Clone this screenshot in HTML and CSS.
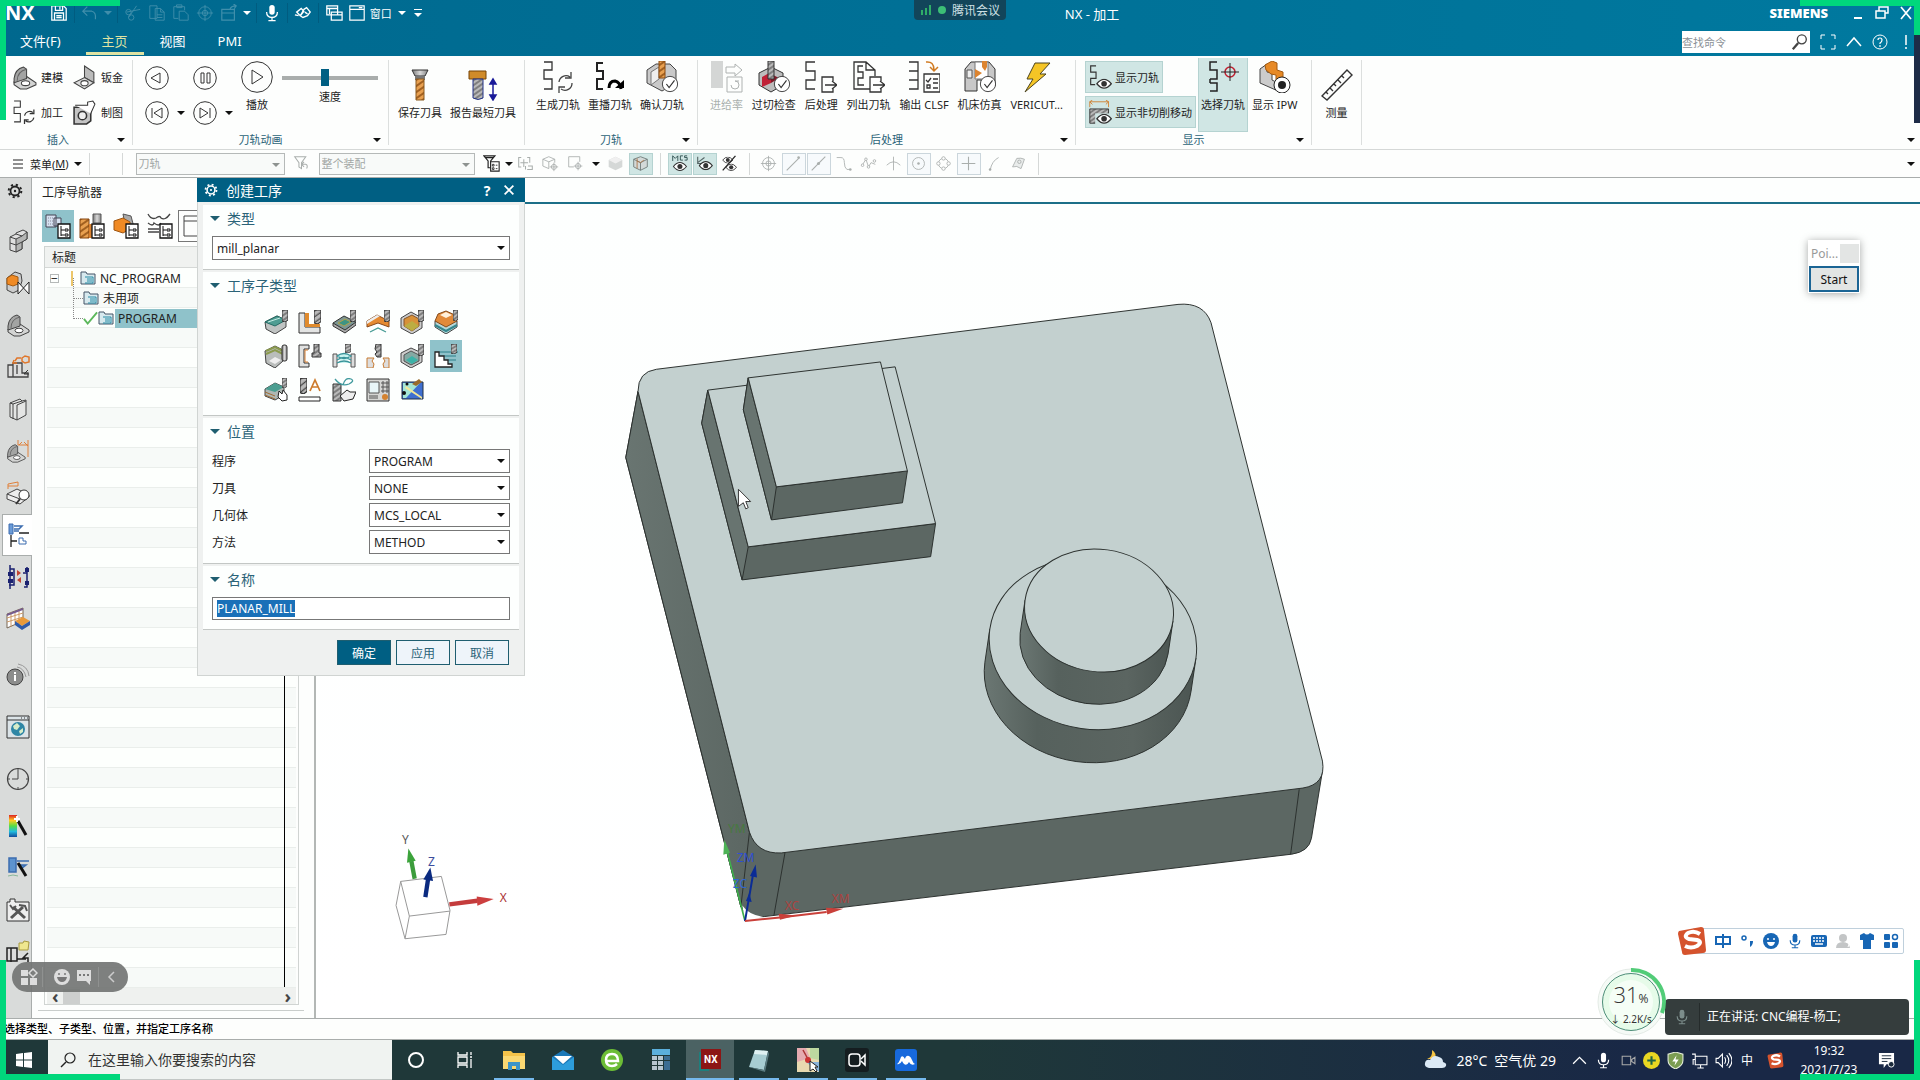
FILE: index.html
```html
<!DOCTYPE html>
<html lang="zh-CN">
<head>
    <meta charset="UTF-8">
    <meta name="viewport" content="width=device-width, initial-scale=1.0">
    <title>NX - 加工</title>
    <link rel="stylesheet" href="styles.css">
</head>
<body>
    <!-- shared icons -->
    <svg class="sprite" aria-hidden="true">
        <defs>
            <linearGradient id="metal" x1="0" x2="1"><stop offset="0" stop-color="#777"/><stop offset=".5" stop-color="#d8d8d8"/><stop offset="1" stop-color="#858585"/></linearGradient>
            <linearGradient id="rainbow" x1="0" y1="0" x2="0" y2="1"><stop offset="0" stop-color="#d22"/><stop offset=".25" stop-color="#fc2"/><stop offset=".5" stop-color="#5d4"/><stop offset=".75" stop-color="#2bd"/><stop offset="1" stop-color="#124a9c"/></linearGradient>
            <pattern id="hatch" width="4" height="4" patternUnits="userSpaceOnUse" patternTransform="rotate(-35)"><rect width="4" height="4" fill="#b9b9b9"/><path d="M0 1H4" stroke="#444"/></pattern>
            <pattern id="drill" width="5" height="5" patternUnits="userSpaceOnUse" patternTransform="rotate(-35)"><rect width="5" height="5" fill="#e8a050"/><path d="M0 1H5" stroke="#8a4a10" stroke-width="1.5"/></pattern>
        </defs>
        <symbol id="save" viewBox="0 0 20 20"><path d="M2 2h13l3 3v13H2zM6 2v5h8V2M11 3v3M5 18v-8h10v8M7 13h6M7 15h6" fill="none" stroke="currentColor" stroke-width="1.4"/></symbol>
        <symbol id="undo" viewBox="0 0 20 20"><path d="M7 3L2 8l5 5M2 8h10q5 1 4 9" fill="none" stroke="currentColor" stroke-width="1.3"/></symbol>
        <symbol id="cut" viewBox="0 0 20 20"><path d="M3 9l15-3M5 15L14 2" stroke="currentColor"/><g fill="none" stroke="currentColor"><circle cx="5" cy="9" r="3"/><circle cx="8" cy="15" r="3"/></g></symbol>
        <symbol id="copy" viewBox="0 0 20 20"><path d="M2 2h8v14H2zM8 5h6l4 4v9H8zM14 5v4h4M10 12h6M10 15h6" fill="none" stroke="currentColor"/></symbol>
        <symbol id="paste" viewBox="0 0 20 20"><path d="M7 16H2V3h12v4M5 3V1h6v3H5M8 8h6l4 4v6H8z" fill="none" stroke="currentColor"/></symbol>
        <symbol id="target" viewBox="0 0 20 20"><g fill="none" stroke="currentColor"><circle cx="10" cy="10" r="7"/><circle cx="10" cy="10" r="3"/><path d="M10 1v18M1 10h18"/></g></symbol>
        <symbol id="boxout" viewBox="0 0 20 20"><path d="M2 6h14v12H2zM2 10h14M11 6q1-4 7-4M15 0l3 2-2 3" fill="none" stroke="currentColor" stroke-width="1.3"/></symbol>
        <symbol id="mic" viewBox="0 0 20 20"><rect x="7" y="1" width="6" height="11" rx="3" fill="currentColor"/><path d="M4 9q0 6 6 6t6-6M10 15v3M6 18.500h8" fill="none" stroke="currentColor" stroke-width="1.4"/></symbol>
        <symbol id="sat" viewBox="0 0 20 20"><path d="M3 9l5-4 3 3-4 5zM11 6l3-2 4 5-3 4-5 2-3-2zM1 12l4 1M12 9l3 2" fill="none" stroke="currentColor" stroke-width="1.500"/></symbol>
        <symbol id="wins" viewBox="0 0 20 20"><path d="M2 2h12v10H2zM2 5h12M7 9h12v9H7zM7 12h12M5 5v6" fill="none" stroke="currentColor" stroke-width="1.4"/></symbol>
        <symbol id="win" viewBox="0 0 20 20"><path d="M2 2h16v16H2zM2 6h16M12 4h4" fill="none" stroke="currentColor" stroke-width="1.3"/></symbol>
        <symbol id="gear" viewBox="0 0 16 16"><circle cx="8" cy="8" r="4.500" fill="none" stroke="currentColor" stroke-width="1.800"/><circle cx="8" cy="8" r="6.300" fill="none" stroke="currentColor" stroke-width="2" stroke-dasharray="2.200 2.750"/><circle cx="8" cy="8" r="1.200" fill="currentColor"/></symbol>
        <symbol id="eye" viewBox="0 0 20 12"><path d="M1 6q9-11 18 0-9 11-18 0z" fill="#fff" stroke="#333" stroke-width="1.500"/><circle cx="10" cy="6" r="3.500" fill="#333"/></symbol>
        <symbol id="bracket" viewBox="0 0 24 24"><path d="M2 16l12-5 9 6v2l-9 4-6 0-6-4z" fill="#d3d4d3" stroke="#444"/><path d="M2 17v-4Q3 4 11 2l3 2v9l-6 2z" fill="#a3a4a3" stroke="#444"/><path d="M5 15Q5 6 14 4" fill="none" stroke="#666"/><ellipse cx="13" cy="17.500" rx="4" ry="2.300" fill="#fff" stroke="#444"/></symbol>
        <symbol id="sheet" viewBox="0 0 24 24"><path d="M12 1l9 6v10l-9-5z" fill="#bbb" stroke="#444"/><path d="M12 12l9 5-9 6-10-6z" fill="#ddd" stroke="#444"/><ellipse cx="12" cy="17.500" rx="3.500" ry="2.500" fill="#fff" stroke="#444"/></symbol>
        <symbol id="mach" viewBox="0 0 24 24"><path d="M2 1h6v6H2v6h6v8H2" fill="none" stroke="#333"/><path d="M12 15a5 5 0 0 1 8-3M21 9v4h-4M21 17a5 5 0 0 1-8 3M12 23v-4h4" fill="none" stroke="#333" stroke-width="1.200"/></symbol>
        <symbol id="draft" viewBox="0 0 24 24"><path d="M2 7h16v13l-4 3H2z" fill="#c4c4c4" stroke="#333" stroke-width="1.500"/><circle cx="10" cy="15" r="4" fill="#eee" stroke="#333" stroke-width="1.500"/><path d="M3 5h12V2l5-1 2 3-4 9" fill="#fff" stroke="#333"/></symbol>
        <symbol id="toolsave" viewBox="0 0 32 32"><path d="M8 1h16l-3 6H11z" fill="url(#metal)" stroke="#333"/><path d="M11 7h10v4H11z" fill="#777"/><path d="M12 10h8v21h-8z" fill="url(#drill)" stroke="#8a5a20"/></symbol>
        <symbol id="toolrep" viewBox="0 0 32 32"><path d="M2 2h17v8H2z" fill="#d08b2a" stroke="#774407"/><path d="M6 10h10v19q-5 3-10 0z" fill="url(#hatch)" stroke="#223388"/><path d="M26 11v18M23 15l3-5 3 5zM23 26l3 5 3-5z" fill="#1a1a99" stroke="#1a1a99" stroke-width="1.500"/></symbol>
        <symbol id="gen" viewBox="0 0 32 32"><path d="M2 1h8v8H2v9h8v10H2" fill="none" stroke="#333" stroke-width="1.300"/><path d="M17 21a7 7 0 0 1 11-5M29 11v6h-6M30 22a7 7 0 0 1-11 6M17 32v-6h6" fill="none" stroke="#444" stroke-width="1.300"/></symbol>
        <symbol id="replay" viewBox="0 0 32 32"><path d="M9 2H3v8h6v8H3v10h6" fill="none" stroke="#222" stroke-width="2"/><path d="M15 27q0-7 6-7 5 1 6 8" fill="none" stroke="#000" stroke-width="3"/><path d="M21 27h9v-8z" fill="#000"/></symbol>
        <symbol id="check" viewBox="0 0 20 20"><circle cx="10" cy="10" r="8.500" fill="#fff" stroke="#333"/><path d="M6 10l3 4 6-8" fill="none" stroke="#333" stroke-width="1.300"/></symbol>
        <symbol id="verify" viewBox="0 0 32 32"><path d="M1 9l9-6 14 0 6 6v13l-14 8-15-8z" fill="#c9c9c9" stroke="#444"/><path d="M5 11l8-5v12l-8 6z" fill="#eee" stroke="#777"/><path d="M13 0h6v17h-6z" fill="url(#drill)" stroke="#8a4a10"/><use href="#check" x="15" y="14" width="18" height="18"/></symbol>
        <symbol id="feed" viewBox="0 0 32 32"><path d="M0 0h12v27H0z" fill="#d4d6d5"/><path d="M15 6h9V3l7 6-7 6v-3h-9zM16 16h15v15H16zM20 24a4 4 0 1 0 4-4h4" fill="none" stroke="#aeb2b1"/></symbol>
        <symbol id="gouge" viewBox="0 0 32 32"><path d="M1 12l12-6 12 6v12l-12 7-12-7z" fill="#bdbdbd" stroke="#333"/><path d="M4 16l9-5v11l-9 4z" fill="#c02036"/><path d="M13 13l8 4-8 5z" fill="#821827"/><path d="M10 0h6v18h-6z" fill="url(#hatch)" stroke="#333"/><use href="#check" x="15" y="14" width="18" height="18"/></symbol>
        <symbol id="post" viewBox="0 0 32 32"><path d="M10 1H1v9h9v9H1v9h9" fill="none" stroke="#333" stroke-width="1.300"/><path d="M28 20v-4H17v15h11v-4M20 24h11M27 20l5 4-5 4" fill="none" stroke="#333" stroke-width="1.300"/></symbol>
        <symbol id="list" viewBox="0 0 32 32"><path d="M17 28H1V1h12l9 8v6M13 1v8h9M10 5H5v6h5v6H5v7h6" fill="none" stroke="#333" stroke-width="1.300"/><path d="M28 20v-4H17v15h11v-4M20 24h11M27 20l5 4-5 4" fill="#fff" stroke="#333" stroke-width="1.300"/></symbol>
        <symbol id="clsf" viewBox="0 0 32 32"><path d="M1 1h9v9H1M10 10v9H1M10 19v9H1M16 13h16v18H16zM18 19l2 2 3-4M19 24h3v3h-3zM25 18h5M25 22h5M25 27h5" fill="none" stroke="#333" stroke-width="1.300"/><path d="M18 1q8-1 8 8M22 6l4 4 4-4" fill="none" stroke="#d07a20" stroke-width="1.500"/></symbol>
        <symbol id="machsim" viewBox="0 0 32 32"><path d="M1 8l6-7h18l6 7v17H20l-3-6h-4v11H1z" fill="#c8c8c8" stroke="#333"/><path d="M11 1h13v17H11z" fill="#fff" stroke="#777"/><path d="M18 0h5v6l-2 4-3-4zM11 8l7 4-7 5z" fill="#dc8430"/><path d="M3 9h5v8H3z" fill="#eee" stroke="#555"/><use href="#check" x="15" y="14" width="18" height="18"/></symbol>
        <symbol id="bolt" viewBox="0 0 32 32"><path d="M14 2h15L19 13h6L4 31l8-13H6z" fill="#f5c526" stroke="#4b4420"/></symbol>
        <symbol id="showpath" viewBox="0 0 28 28"><path d="M9 1H3v7h6v7H3v7h5" fill="none" stroke="#333" stroke-width="1.300"/><use href="#eye" x="9" y="15" width="18" height="12"/></symbol>
        <symbol id="showcut" viewBox="0 0 28 28"><path d="M2 10h21v16H2z" fill="url(#hatch)" stroke="#333"/><path d="M2 8V2h21v6M5 0L2 2l3 3M20 0l3 2-3 3" fill="none" stroke="#d08030"/><path d="M8 15h20v13H8z" fill="#d0e6e4"/><use href="#eye" x="9" y="15" width="18" height="12"/></symbol>
        <symbol id="pick" viewBox="0 0 32 32"><path d="M10 1H3v8h7v9H3M10 18v0M3 9M3 22h7v8H3" fill="none" stroke="#222" stroke-width="1.500"/><path d="M3 18v4" stroke="#222" stroke-width="1.500"/><circle cx="23" cy="11" r="5" fill="none" stroke="#c02030" stroke-width="1.500"/><path d="M23 2v18M14 11h18" stroke="#222"/></symbol>
        <symbol id="ipw" viewBox="0 0 32 32"><path d="M1 8l7-5v8l5 1v7l6 3v8L1 22z" fill="#ccc" stroke="#444"/><path d="M6 4l7-4 5 2v7l6 2v7l6 3-6 5-7-5v-7l-5-1-5-4z" fill="#e78a26" stroke="#a35a10"/><circle cx="23" cy="24" r="8" fill="#fff" stroke="#222"/><circle cx="23" cy="24" r="4" fill="#222"/></symbol>
        <symbol id="ruler" viewBox="0 0 32 32"><path d="M1 27L26 1l5 5L6 31zM5 23l2 2M9 19l3 3M13 15l2 2M17 11l3 3M21 7l2 2" fill="none" stroke="#333" stroke-width="1.400"/></symbol>
        <symbol id="funnel" viewBox="0 0 20 20"><path d="M2 2h13l-5 7v7l-3-2V9zM11 11h4q3 1 1 5M13 8l-3 3 3 3" fill="none" stroke="currentColor" stroke-width="1.200"/></symbol>
        <symbol id="funnel2" viewBox="0 0 20 20"><path d="M1 1h13l-5 6v8H6V7zM3 3h9" fill="none" stroke="currentColor" stroke-width="1.400"/><path d="M9 8h10v11H9z" fill="#fff" stroke="currentColor" stroke-width="1.300"/><path d="M11 11h2v2h-2zM11 15h2v2h-2zM15 12h2M15 16h2" fill="none" stroke="currentColor"/></symbol>
        <symbol id="move" viewBox="0 0 20 20"><path d="M5 3H2v11h3M12 3h3v6M8 5v9M4 9h9M13 13h5v4h-6M10 13v4" fill="none" stroke="currentColor" stroke-width="1.200"/></symbol>
        <symbol id="cube" viewBox="0 0 20 20"><path d="M1 5l7-3 7 3v4M1 5v8l7 3M1 5l7 3 7-3M8 8v8" fill="none" stroke="currentColor"/><circle cx="14" cy="14" r="3" fill="none" stroke="currentColor"/><path d="M14 9v10M9 14h10" stroke="currentColor"/></symbol>
        <symbol id="cubef" viewBox="0 0 20 20"><path d="M2 6l8-4 8 4v8l-8 4-8-4z" fill="#d5d8d7"/><path d="M2 6l8-4 8 4-8 4z" fill="#f0f0f0"/></symbol>
        <symbol id="cubec" viewBox="0 0 20 20"><path d="M2 5l8-3 8 3v9l-8 4-8-4z" fill="#d3d9d8" stroke="#6c7775"/><path d="M2 5l8 4 8-4M10 9v9" fill="none" stroke="#6c7775"/><path d="M6 4v12M6 7l4 2 4-3" fill="none" stroke="#ae7245"/></symbol>
        <symbol id="sel" viewBox="0 0 20 20"><path d="M8 14H2V2h13v6" fill="none" stroke="currentColor"/><circle cx="13" cy="13" r="3" fill="none" stroke="currentColor"/><path d="M13 8v10M8 13h10" stroke="currentColor"/></symbol>
        <symbol id="veye" viewBox="0 0 20 20"><path d="M2 2v8h5M2 9l8-6" fill="none" stroke="#566" stroke-width="1.300"/><use href="#eye" x="3" y="7" width="17" height="11"/></symbol>
        <symbol id="mcs" viewBox="0 0 20 20"><path d="M2 7V1l3 3 3-3v6M14 1h-3v5h3M19 1h-3v2h3v3h-3" fill="none" stroke="#244"/><use href="#eye" x="2" y="8" width="17" height="11"/></symbol>
        <symbol id="noeye" viewBox="0 0 20 20"><use href="#eye" x="1" y="2" width="14" height="8"/><use href="#eye" x="5" y="10" width="14" height="9"/><path d="M2 18L17 1" stroke="#222" stroke-width="1.500"/></symbol>
        <symbol id="l1" viewBox="0 0 20 20"><path d="M2 18L17 3" stroke="currentColor" stroke-width="1.300"/><circle cx="16" cy="3" r="1.500" fill="currentColor"/></symbol>
        <symbol id="l2" viewBox="0 0 20 20"><path d="M2 18L18 2" stroke="currentColor" stroke-width="1.300"/><circle cx="10" cy="10" r="1.800" fill="currentColor"/></symbol>
        <symbol id="l3" viewBox="0 0 20 20"><path d="M2 3h5q4 0 4 6t3 8h4" fill="none" stroke="currentColor"/><circle cx="18" cy="17" r="1.500" fill="currentColor"/></symbol>
        <symbol id="l4" viewBox="0 0 20 20"><path d="M2 13l5-8 3 9 3-5 5 2" fill="none" stroke="currentColor"/><g fill="#fff" stroke="currentColor"><circle cx="3" cy="12" r="1.500"/><circle cx="7" cy="5" r="1.500"/><circle cx="10" cy="14" r="1.500"/><circle cx="17" cy="7" r="1.500"/></g></symbol>
        <symbol id="l5" viewBox="0 0 20 20"><path d="M10 2v16M2 12q8-8 16 0" fill="none" stroke="currentColor"/></symbol>
        <symbol id="l6" viewBox="0 0 20 20"><circle cx="10" cy="10" r="7" fill="none" stroke="currentColor"/><circle cx="10" cy="10" r="1.500" fill="currentColor"/></symbol>
        <symbol id="l7" viewBox="0 0 20 20"><circle cx="10" cy="10" r="6" fill="none" stroke="currentColor"/><g fill="#fff" stroke="currentColor"><circle cx="10" cy="4" r="2"/><circle cx="10" cy="16" r="2"/><circle cx="4" cy="10" r="2"/><circle cx="16" cy="10" r="2"/></g></symbol>
        <symbol id="l8" viewBox="0 0 20 20"><path d="M10 2v16M2 10h16" stroke="currentColor" stroke-width="1.300"/></symbol>
        <symbol id="l9" viewBox="0 0 20 20"><path d="M6 18Q8 7 16 3" fill="none" stroke="currentColor"/><circle cx="6" cy="17" r="1.500" fill="currentColor"/></symbol>
        <symbol id="l10" viewBox="0 0 20 20"><path d="M3 14l5-10q5-1 9 1l-4 11q-5-4-10-2z" fill="#e9eceb" stroke="currentColor"/><circle cx="11" cy="8" r="2" fill="none" stroke="currentColor"/></symbol>
        <!-- resource bar -->
        <symbol id="r1" viewBox="0 0 24 24"><path d="M4 8l6-3 0-1 7-3 4 2v7l-5 3v7l-6 3-6-2z" fill="#dfdfdf" stroke="#444"/><path d="M10 10l6-3 5-4v7l-5 3v7l-6 3z" fill="#b4b5b4" stroke="#444"/><path d="M4 8l6 2M4 14l6 2 6-3M10 5l6 2" fill="none" stroke="#444"/></symbol>
        <symbol id="r2" viewBox="0 0 24 24"><path d="M1 7l8-6 6 2 1 7-3 9-6 3-6-3z" fill="#ccc" stroke="#444"/><path d="M1 7l5-3 6 2v7l-5 2-6-2z" fill="#f08a24" stroke="#a45a10"/><path d="M12 11v12l11-12v12z" fill="#fff" stroke="#222"/></symbol>
        <symbol id="r4" viewBox="0 0 24 24"><path d="M2 10h5V8h9v10h6v4H2zM7 9v13M11 10v9M2 22h20" fill="#ddd" stroke="#444" stroke-width="1.300"/><path d="M22 15l-4 4h5" fill="none" stroke="#333"/><path d="M9 6l2-3h4M16 3l3-2 4 1v5l-4 1-3-2zM8 5l-1 3h4" fill="none" stroke="#e0762a" stroke-width="1.500"/></symbol>
        <symbol id="r5" viewBox="0 0 24 24"><path d="M4 6l10-4 2 2 4-1v15l-9 5-7-3zM4 6l3 1v15M7 7l9-3M11 8v15M11 8l9-4" fill="#e4e5e4" stroke="#444"/></symbol>
        <symbol id="r6" viewBox="0 0 24 24"><use href="#bracket" y="4" width="20" height="20"/><path d="M12 1v5h10V1M13 6l3-3M18 3l4 4M22 6v12" fill="none" stroke="#e0803a"/></symbol>
        <symbol id="r7" viewBox="0 0 24 24"><path d="M1 13l10-5 12 6v2l-9 7-13-5z" fill="#eee" stroke="#444"/><path d="M1 13l13 5 9-4" fill="none" stroke="#444"/><path d="M2 8V3l10-2v4M2 5h10" fill="none" stroke="#e0803a"/><circle cx="18" cy="14" r="5" fill="#fff" stroke="#333"/><path d="M14 18l-4 5" stroke="#333" stroke-width="2"/></symbol>
        <symbol id="r8" viewBox="0 0 24 24"><path d="M3 1h4v10H3z" fill="#6a9bd8" stroke="#3d6db0"/><path d="M8 3h8l-3 3H8M8 8h5" fill="none" stroke="#3d6db0" stroke-width="1.500"/><path d="M5 12v12M5 18h6M13 10h10" stroke="#222" stroke-width="1.300"/><path d="M13 15h4v3h3v3h-7z" fill="#fff" stroke="#3d6db0"/></symbol>
        <symbol id="r9" viewBox="0 0 24 24"><path d="M4 0v24M4 4h4v16H3M21 2v20h-3M21 8h-4" fill="none" stroke="#1a2170" stroke-width="1.500"/><path d="M2 7h5v4H2zM2 14h5v4H2zM19 3h4v4h-4zM19 16h4v4h-4z" fill="#1a2170"/><path d="M11 5l4 3-4 3zM15 12l-4 3 4 3z" fill="#c24433"/></symbol>
        <symbol id="r10" viewBox="0 0 24 24"><path d="M1 7l16-6v13L1 21z" fill="#fff" stroke="#765"/><path d="M1 11l16-5M1 15l16-5M5 5v15M9 4v14M13 3v14" stroke="#c96"/><path d="M1 7l16-6v2L1 9z" fill="#745a90"/><path d="M9 14l8-4 7 4-8 5z" fill="#e99a3a"/><path d="M9 14v4l7 5 8-5v-4l-8 5z" fill="#2f5ba8"/></symbol>
        <symbol id="r11" viewBox="0 0 24 24"><circle cx="9" cy="14" r="8" fill="#8c8d8c" stroke="#444"/><path d="M9 12v6M9 9v2" stroke="#fff" stroke-width="2"/><path d="M11 4q7 1 9 10M12 1q10 2 11 12" fill="none" stroke="#999"/></symbol>
        <symbol id="r12" viewBox="0 0 24 24"><path d="M1 1h22v22H1zM1 5h22" fill="#dce4e8" stroke="#333"/><path d="M15 3h1M18 3h1M21 3h1" stroke="#333"/><circle cx="12" cy="14" r="7" fill="#2f86a5"/><path d="M7 11l4-3 3 3-3 4-3-1zM13 16l4-3 0 4-3 2z" fill="#d6ecc9"/></symbol>
        <symbol id="r13" viewBox="0 0 24 24"><circle cx="12" cy="12" r="10.500" fill="none" stroke="#444" stroke-width="1.200"/><path d="M12 4v8H6M12 1v3M12 20v3M1 12h3M20 12h3" fill="none" stroke="#444"/></symbol>
        <symbol id="r14" viewBox="0 0 24 24"><path d="M3 1h8v22H3z" fill="url(#rainbow)"/><path d="M12 7l8 14" stroke="#111" stroke-width="3"/><path d="M8 5h6M11 2v6" stroke="#fff" stroke-width="2"/></symbol>
        <symbol id="r15" viewBox="0 0 24 24"><path d="M3 2h7v14H3zM11 5h12M13 9h7l-5 4" fill="#5d93cf" stroke="#3d6db0" stroke-width="1.500"/><path d="M2 20q5-2 10 0" stroke="#89b89a" fill="none"/><path d="M12 7l8 13" stroke="#111" stroke-width="3"/></symbol>
        <symbol id="r16" viewBox="0 0 24 24"><path d="M1 4h3V1h5v3h14v19H1z" fill="#eee" stroke="#333"/><path d="M5 20L17 9M7 9l12 11" stroke="#555" stroke-width="3"/><path d="M4 7l3 4 3-3M13 7l6 1 2 5" fill="none" stroke="#555" stroke-width="2"/></symbol>
        <symbol id="r17" viewBox="0 0 24 24"><path d="M1 8h10v13H1zM5 8v14M11 10v9h9M22 13l-5 5h5v4" fill="#ddd" stroke="#222" stroke-width="1.500"/><path d="M13 3h4l1-2 5 1-1 8h-9z" fill="#efe78f" stroke="#a89a40"/></symbol>
        <!-- navigator -->
        <symbol id="tree" viewBox="0 0 14 16"><path d="M1 1h12v14H1z" fill="#fff" stroke="#111" stroke-width="1.300"/><path d="M4 3v10M4 7h3M4 12h3M8 6h3v2H8zM8 11h3v2H8z" fill="none" stroke="#111"/></symbol>
        <symbol id="n1" viewBox="0 0 26 26"><path d="M1 2h10v12H1zM9 5h7v8H9z" fill="#d5e0ef" stroke="#445"/><path d="M3 5h6M3 8h6M3 11h6" stroke="#889" stroke-dasharray="1 1"/><use href="#tree" x="12" y="10" width="14" height="16"/></symbol>
        <symbol id="n2" viewBox="0 0 26 26"><path d="M1 6h9v19H1z" fill="url(#drill)" stroke="#84450f"/><path d="M14 1h8v9h-8z" fill="url(#metal)" stroke="#555"/><path d="M10 11h10v14H10z" fill="#d98232"/><use href="#tree" x="12" y="10" width="14" height="16"/></symbol>
        <symbol id="n3" viewBox="0 0 26 26"><path d="M10 1l8 2 4 15-8 4z" fill="#aaa" stroke="#555"/><path d="M1 8l9-3 7 4v7l-7 4-9-3z" fill="#f08a24" stroke="#9e5510"/><use href="#tree" x="12" y="10" width="14" height="16"/></symbol>
        <symbol id="n4" viewBox="0 0 26 26"><path d="M1 1q3 6 8 4 4-3 5 0 4 3 9-4M1 10q5 4 6 0 5 4 7 0M1 19h11M1 16h11" fill="none" stroke="#444" stroke-width="1.300"/><use href="#tree" x="12" y="10" width="14" height="16"/></symbol>
        <symbol id="folder" viewBox="0 0 16 16"><path d="M1 14V2h5l1 2h8v10z" fill="#d7e9ee" stroke="#456"/><path d="M5 7h8v6H5M7 9h5M7 11h5" fill="none" stroke="#258ba5"/></symbol>
        <!-- operation sub types -->
        <symbol id="bit" viewBox="0 0 6 12" preserveAspectRatio="none"><path d="M0 0h6v10l-3 2-3-1z" fill="url(#hatch)" stroke="#333"/></symbol>
        <symbol id="o1" viewBox="0 0 24 24"><path d="M1 12l12-6 9 4v7l-11 7-9-5z" fill="#bfc3c2" stroke="#444"/><path d="M1 12l12-6 9 4-11 6z" fill="#4f9d93" stroke="#256b64"/><path d="M4 12l12-4" stroke="#c6ece4"/><use href="#bit" x="18" width="6" height="12"/></symbol>
        <symbol id="o2" viewBox="0 0 24 24"><path d="M1 3h6v14h15v6H1z" fill="#e3e4e3" stroke="#333"/><path d="M7 3h4v11h11v3H7z" fill="#e08b2d"/><use href="#bit" x="16" width="7" height="14"/></symbol>
        <symbol id="o3" viewBox="0 0 24 24"><path d="M1 13v3l12 7 11-8v-3" fill="#aaa" stroke="#333"/><path d="M1 13l11-7 12 6-11 8z" fill="#7c9693" stroke="#333"/><path d="M6 13l7-4 6 3-7 4z" fill="#3e9483" stroke="#b1a24c"/><use href="#bit" x="18" width="6" height="12"/></symbol>
        <symbol id="o4" viewBox="0 0 24 24"><path d="M1 11l10-6 12 6v6l-11-4-11 4z" fill="#e58a32" stroke="#87491b"/><path d="M1 11l10-6 3 1L1 14z" fill="#eee"/><path d="M4 22l8-4 8 4" fill="none" stroke="#469b94" stroke-width="1.300"/><use href="#bit" x="18" width="6" height="12"/></symbol>
        <symbol id="o5" viewBox="0 0 24 24"><path d="M1 8l10-6 11 6v10l-10 6-11-6z" fill="#ccc" stroke="#444"/><path d="M4 9l8-4 7 4v7l-7 5-8-5z" fill="#d89138" stroke="#85552a"/><path d="M4 16l8-5 7 5-7 5z" fill="#bcad42"/><use href="#bit" x="18" width="6" height="12"/></symbol>
        <symbol id="o6" viewBox="0 0 24 24"><path d="M1 11h22v6l-11 7-11-7z" fill="#b6d8d9" stroke="#444"/><path d="M1 11l3-7 8-3 9 4 2 6-11 6z" fill="#e18a3a" stroke="#854b1c"/><path d="M6 5l6-3 6 3-6 3z" fill="#fff1dc"/><path d="M1 15l11 6 11-6" fill="none" stroke="#34868d" stroke-width="2"/><use href="#bit" x="19" width="5" height="11"/></symbol>
        <symbol id="o7" viewBox="0 0 24 24"><path d="M1 7l10-5 8 4v11l-8 7-9-5z" fill="#b9bdbb" stroke="#444"/><path d="M2 7l9-4 8 4M2 10l9-4 8 4" fill="none" stroke="#8a9a4d" stroke-width="2"/><path d="M5 17l6-4 6 3-6 4z" fill="#eee"/><rect x="18" y="1" width="5" height="16" rx="2" fill="url(#metal)" stroke="#333"/></symbol>
        <symbol id="o8" viewBox="0 0 24 24"><path d="M1 1h10v4H6v14h5v4H1z" fill="#e1e2e1" stroke="#333"/><path d="M10 6H7v12h3" fill="none" stroke="#d88032"/><path d="M16 0h5v9h2v4h-9V9h2z" fill="url(#hatch)" stroke="#333"/></symbol>
        <symbol id="o9" viewBox="0 0 24 24"><path d="M1 10h4v13H1zM19 10h4v13h-4z" fill="#ddd" stroke="#555"/><path d="M5 12q7-5 14 0-7 5-14 0M5 16q7-5 14 0M5 19q7-4 14 0" fill="#c8f2ef" stroke="#39949a" stroke-width="1.300"/><use href="#bit" x="13" width="6" height="9"/></symbol>
        <symbol id="o10" viewBox="0 0 24 24"><path d="M1 14h7l-2 3 2 3-1 4H1zM23 14h-6l2 3-2 3 1 4h5z" fill="#ddd" stroke="#c77a32"/><path d="M10 0h5v13h-4l-2-3 2-2-2-3z" fill="url(#hatch)" stroke="#333"/></symbol>
        <symbol id="o11" viewBox="0 0 24 24"><path d="M1 9l10-5 11 5v9l-11 6-10-6z" fill="#ccc" stroke="#444"/><path d="M4 11l7-4 8 4v6l-8 4-7-4z" fill="#85a9a3" stroke="#555"/><path d="M6 16l6-4 6 4-6 4z" fill="#3cb3a8"/><use href="#bit" x="18" width="6" height="12"/></symbol>
        <symbol id="o12" viewBox="0 0 24 24"><path d="M5 8h19M10 12h12M14 16h8" stroke="#2a7f88"/><path d="M1 8h4v4h5v4h4v4h4v3H1z" fill="#fff" stroke="#222" stroke-width="1.300"/><use href="#bit" x="17" width="6" height="10"/></symbol>
        <symbol id="o13" viewBox="0 0 24 24"><path d="M1 11l10-6 9 4v8l-9 5-10-4z" fill="#aeb7b4" stroke="#444"/><path d="M1 11l10-6 9 4-9 5z" fill="#4b9e91"/><path d="M1 14l10 4M1 17l10 4" stroke="#a06b34"/><use href="#bit" x="18" width="5" height="10"/><path d="M15 13l3 3 1-4 4 5v5l-5 1-4-4z" fill="#fff" stroke="#222"/></symbol>
        <symbol id="o14" viewBox="0 0 24 24"><use href="#bit" x="2" width="7" height="16"/><path d="M12 13L17 2l5 11M14 9h6" fill="none" stroke="#cd7b2d" stroke-width="1.700"/><path d="M1 19h21v4H1z" fill="#fff" stroke="#222"/></symbol>
        <symbol id="o15" viewBox="0 0 24 24"><path d="M1 6h8v17H1z" fill="url(#hatch)" stroke="#333"/><path d="M3 1q6 8 14 5 6-3 2-5-6-2-8 6" fill="none" stroke="#419a9e" stroke-width="1.300"/><path d="M8 18l7-6 3 2 6 0-3 7-9 2z" fill="#eee" stroke="#222"/></symbol>
        <symbol id="o16" viewBox="0 0 24 24"><path d="M1 1h22v22H1z" fill="#d6d6d4" stroke="#333"/><path d="M3 4h10v11H3z" fill="#e8f5f8" stroke="#555"/><path d="M16 4h2v2h-2zM20 4h2v2h-2zM16 8h2v2h-2zM20 8h2v2h-2zM16 12h2v2h-2zM20 12h2v2h-2zM3 18h9M3 20h9" stroke="#555" fill="none"/><circle cx="19" cy="19" r="3" fill="#d5822f"/></symbol>
        <symbol id="o17" viewBox="0 0 24 24"><path d="M2 4h21v17H2z" fill="#3f6fd0" stroke="#234"/><path d="M3 5h17L6 20H3z" fill="#a5e6d6"/><path d="M6 8l16 11v2L5 10z" fill="#f3e79a"/><path d="M12 6l7-5 3 3-6 4z" fill="#996b2b"/><circle cx="4" cy="15" r="2" fill="#111"/><circle cx="7" cy="6" r="1.500" fill="#111"/></symbol>
        <!-- input method -->
        <symbol id="sg" viewBox="0 0 30 30"><path d="M2 5l22-4q3 0 3 3l2 20q0 3-3 3L8 29q-3 0-3-3L1 8q0-2 1-3z" fill="#d5532d"/><path d="M23 8q-6-4-12-1-5 4 1 6l8 1q6 2 0 6-6 3-12 0" fill="none" stroke="#fff" stroke-width="4"/></symbol>
    </svg>

    <header class="titlebar">
        <div class="title-left">
            <strong class="nx">NX</strong>
            <button class="tb" aria-label="保存"><svg><use href="#save"/></svg></button>
            <span class="tb-sep"></span>
            <button class="tb dim" aria-label="撤消"><svg><use href="#undo"/></svg></button>
            <i class="caret dim"></i>
            <span class="tb-sep"></span>
            <button class="tb dim" aria-label="剪切"><svg><use href="#cut"/></svg></button>
            <button class="tb dim" aria-label="复制"><svg><use href="#copy"/></svg></button>
            <button class="tb dim" aria-label="粘贴"><svg><use href="#paste"/></svg></button>
            <button class="tb dim" aria-label="定位"><svg><use href="#target"/></svg></button>
            <button class="tb dim" aria-label="导出"><svg><use href="#boxout"/></svg></button>
            <i class="caret"></i>
            <span class="tb-sep"></span>
            <button class="tb" aria-label="语音"><svg><use href="#mic"/></svg></button>
            <span class="tb-sep"></span>
            <button class="tb" aria-label="触控模式"><svg><use href="#sat"/></svg></button>
            <span class="tb-sep"></span>
            <button class="tb" aria-label="切换窗口"><svg><use href="#wins"/></svg></button>
            <button class="tb wide"><svg><use href="#win"/></svg>窗口<i class="caret"></i></button>
            <i class="caret lined"></i>
        </div>
        <div class="title-text">NX - 加工</div>
        <div class="title-right">
            <strong class="siemens">SIEMENS</strong>
            <button class="wc" aria-label="最小化"><svg viewBox="0 0 16 16"><path d="M4 13h8" stroke="#fff" stroke-width="2"/></svg></button>
            <button class="wc" aria-label="还原"><svg viewBox="0 0 16 16"><path d="M5 6V2h9v6h-3M2 6h9v7H2z" fill="none" stroke="#fff" stroke-width="1.500"/></svg></button>
            <button class="wc" aria-label="关闭"><svg viewBox="0 0 16 16"><path d="M3 2l10 12M13 2L3 14" stroke="#fff" stroke-width="1.700"/></svg></button>
        </div>
    </header>

    <nav class="tabs">
        <a href="#">文件(F)</a>
        <a href="#" class="active">主页</a>
        <a href="#">视图</a>
        <a href="#">PMI</a>
        <div class="tab-tools">
            <label class="find"><input type="text" placeholder="查找命令" aria-label="查找命令"><svg viewBox="0 0 20 20"><circle cx="12" cy="7" r="5" fill="none" stroke="#444" stroke-width="1.500"/><path d="M8 11l-6 7" stroke="#444" stroke-width="2.500"/></svg></label>
            <button class="wc" aria-label="全屏"><svg viewBox="0 0 16 16"><path d="M1 5V1h4M11 1h4v4M15 11v4h-4M5 15H1v-4" fill="none" stroke="#fff"/></svg></button>
            <button class="wc" aria-label="收起"><svg viewBox="0 0 16 16"><path d="M1 12l7-8 7 8" fill="none" stroke="#fff" stroke-width="1.500"/></svg></button>
            <button class="wc" aria-label="帮助"><svg viewBox="0 0 16 16"><circle cx="8" cy="8" r="7" fill="none" stroke="#fff"/><path d="M6 6q0-2 2-2t2 2-2 3v1M8 11v2" fill="none" stroke="#fff" stroke-width="1.200"/></svg></button>
            <button class="wc" aria-label="通知"><svg viewBox="0 0 16 16"><path d="M8 1v10M8 13v2" stroke="#fff" stroke-width="1.500"/></svg></button>
        </div>
    </nav>

    <section class="ribbon">
        <div class="group insert">
            <div class="group-body">
                <button class="small"><svg><use href="#bracket"/></svg>建模</button>
                <button class="small"><svg><use href="#sheet"/></svg>钣金</button>
                <button class="small"><svg><use href="#mach"/></svg>加工</button>
                <button class="small"><svg><use href="#draft"/></svg>制图</button>
            </div>
            <div class="group-label">插入<i class="caret"></i></div>
        </div>
        <div class="group anim">
            <div class="group-body">
                <div class="transport">
                    <button class="round" aria-label="后退"><svg viewBox="0 0 24 24"><circle cx="12" cy="12" r="11.300"/><path d="M15 7v10l-9-5z"/></svg></button><i></i>
                    <button class="round" aria-label="暂停"><svg viewBox="0 0 24 24"><circle cx="12" cy="12" r="11.300"/><path d="M8 7h3v10H8zM14 7h3v10h-3z"/></svg></button><i></i>
                    <button class="round" aria-label="上一步"><svg viewBox="0 0 24 24"><circle cx="12" cy="12" r="11.300"/><path d="M7 7v10M17 7v10l-8-5z"/></svg></button><i class="caret"></i>
                    <button class="round" aria-label="下一步"><svg viewBox="0 0 24 24"><circle cx="12" cy="12" r="11.300"/><path d="M17 7v10M7 7v10l8-5z"/></svg></button><i class="caret"></i>
                </div>
                <button class="big play"><svg viewBox="0 0 32 32"><circle cx="16" cy="16" r="15.300"/><path d="M11 9v14l11-7z"/></svg>播放</button>
                <label class="speed"><input type="range" min="0" max="100" value="44">速度</label>
            </div>
            <div class="group-label">刀轨动画<i class="caret"></i></div>
        </div>
        <div class="group tools mid">
            <div class="group-body">
                <button class="big"><svg><use href="#toolsave"/></svg>保存刀具</button>
                <button class="big"><svg><use href="#toolrep"/></svg>报告最短刀具</button>
            </div>
        </div>
        <div class="group path">
            <div class="group-body">
                <button class="big"><svg><use href="#gen"/></svg>生成刀轨</button>
                <button class="big"><svg><use href="#replay"/></svg>重播刀轨</button>
                <button class="big"><svg><use href="#verify"/></svg>确认刀轨</button>
            </div>
            <div class="group-label">刀轨<i class="caret"></i></div>
        </div>
        <div class="group post">
            <div class="group-body">
                <button class="big" disabled><svg><use href="#feed"/></svg>进给率</button>
                <button class="big"><svg><use href="#gouge"/></svg>过切检查</button>
                <button class="big"><svg><use href="#post"/></svg>后处理</button>
                <button class="big"><svg><use href="#list"/></svg>列出刀轨</button>
                <button class="big"><svg><use href="#clsf"/></svg>输出 CLSF</button>
                <button class="big"><svg><use href="#machsim"/></svg>机床仿真</button>
                <button class="big"><svg><use href="#bolt"/></svg>VERICUT...</button>
            </div>
            <div class="group-label">后处理<i class="caret"></i></div>
        </div>
        <div class="group show">
            <div class="group-body">
                <div class="toggles">
                    <button class="toggle"><svg><use href="#showpath"/></svg>显示刀轨</button>
                    <button class="toggle"><svg><use href="#showcut"/></svg>显示非切削移动</button>
                </div>
                <button class="big on"><svg><use href="#pick"/></svg>选择刀轨</button>
                <button class="big"><svg><use href="#ipw"/></svg>显示 IPW</button>
            </div>
            <div class="group-label">显示<i class="caret"></i></div>
        </div>
        <div class="group measure mid">
            <div class="group-body">
                <button class="big"><svg><use href="#ruler"/></svg>测量</button>
            </div>
        </div>
        <div class="group-end"><i class="caret"></i></div>
    </section>

    <section class="selbar">
        <button class="menu"><svg viewBox="0 0 12 12"><path d="M1 2h10M1 6h10M1 10h10" stroke="#222"/></svg>菜单(<u>M</u>) <i class="caret"></i></button>
        <span class="sep"></span>
        <span class="sep far"></span>
        <span class="combo off"><select aria-label="类型过滤器" disabled><option>刀轨</option></select></span>
        <button class="ic"><svg><use href="#funnel"/></svg></button>
        <span class="combo off scope"><select aria-label="选择范围" disabled><option>整个装配</option></select></span>
        <button class="ic dark"><svg><use href="#funnel2"/></svg></button><i class="caret"></i>
        <button class="ic"><svg><use href="#move"/></svg></button>
        <button class="ic"><svg><use href="#cube"/></svg></button>
        <button class="ic"><svg><use href="#sel"/></svg></button><i class="caret spaced"></i>
        <button class="ic"><svg><use href="#cubef"/></svg></button>
        <button class="ic on"><svg><use href="#cubec"/></svg></button>
        <span class="sep"></span>
        <button class="ic on"><svg><use href="#mcs"/></svg></button>
        <button class="ic on"><svg><use href="#veye"/></svg></button>
        <button class="ic"><svg><use href="#noeye"/></svg></button>
        <span class="sep"></span>
        <button class="ic"><svg><use href="#target"/></svg></button>
        <button class="ic framed"><svg><use href="#l1"/></svg></button>
        <button class="ic framed"><svg><use href="#l2"/></svg></button>
        <button class="ic"><svg><use href="#l3"/></svg></button>
        <button class="ic"><svg><use href="#l4"/></svg></button>
        <button class="ic"><svg><use href="#l5"/></svg></button>
        <button class="ic framed"><svg><use href="#l6"/></svg></button>
        <button class="ic"><svg><use href="#l7"/></svg></button>
        <button class="ic framed"><svg><use href="#l8"/></svg></button>
        <button class="ic"><svg><use href="#l9"/></svg></button>
        <button class="ic"><svg><use href="#l10"/></svg></button>
        <span class="sep"></span>
        <i class="caret end"></i>
    </section>

    <main class="work">
        <aside class="rail">
            <button class="rail-gear" aria-label="设置"><svg><use href="#gear"/></svg></button>
            <button><svg><use href="#r1"/></svg></button>
            <button><svg><use href="#r2"/></svg></button>
            <button><svg><use href="#bracket"/></svg></button>
            <button><svg><use href="#r4"/></svg></button>
            <button><svg><use href="#r5"/></svg></button>
            <button><svg><use href="#r6"/></svg></button>
            <button><svg><use href="#r7"/></svg></button>
            <button class="current"><svg><use href="#r8"/></svg></button>
            <button><svg><use href="#r9"/></svg></button>
            <button><svg><use href="#r10"/></svg></button>
            <div class="rail-web">
                <button><svg><use href="#r11"/></svg></button>
                <button><svg><use href="#r12"/></svg></button>
                <button><svg><use href="#r13"/></svg></button>
            </div>
            <button><svg><use href="#r14"/></svg></button>
            <button><svg><use href="#r15"/></svg></button>
            <button><svg><use href="#r16"/></svg></button>
            <button><svg><use href="#r17"/></svg></button>
        </aside>

        <section class="navigator">
            <h2>工序导航器</h2>
            <div class="nav-tools">
                <button class="on"><svg><use href="#n1"/></svg></button>
                <button><svg><use href="#n2"/></svg></button>
                <button><svg><use href="#n3"/></svg></button>
                <button><svg><use href="#n4"/></svg></button>
                <button class="box"><svg viewBox="0 0 26 26"><path d="M3 3h20v20H3zM3 8h20" fill="none" stroke="#444"/></svg></button>
            </div>
            <div class="tree">
                <div class="tree-head">标题</div>
                <ul>
                    <li><span class="expander">−</span><span class="bang"></span><svg><use href="#folder"/></svg>NC_PROGRAM</li>
                    <li class="sub"><svg><use href="#folder"/></svg>未用项</li>
                    <li class="sub ok"><svg class="tick" viewBox="0 0 16 16"><path d="M1 9l4 5L15 2" fill="none" stroke="#5cb85c" stroke-width="2"/></svg><svg><use href="#folder"/></svg><span class="picked">PROGRAM</span></li>
                </ul>
                <div class="hscroll"><span>‹</span><span class="thumb"></span><span class="right">›</span></div>
            </div>
        </section>

        <section class="viewport">
            <div class="tabline"></div>
            <svg class="scene" viewBox="258 167 1310 665" preserveAspectRatio="xMinYMin meet">
                <defs>
                    <linearGradient id="cyl" x1="0" x2="1"><stop offset="0" stop-color="#6b7773"/><stop offset=".25" stop-color="#56615d"/><stop offset=".7" stop-color="#5b6561"/><stop offset="1" stop-color="#4b5552"/></linearGradient>
                    <linearGradient id="left" x1="0" y1="0" x2="1" y2="0"><stop offset="0" stop-color="#697571"/><stop offset="1" stop-color="#5c6763"/></linearGradient>
                </defs>
                <g stroke="#2b302e" stroke-width=".8" stroke-linejoin="round">
                    <path d="M521 320L511 374L605 741Q610 751 624 749L1055 698Q1069 696 1071 685L1080 630L800 500z" fill="#5c6763"/>
                    <path d="M521 320L511 374L605 741L612 680z" fill="url(#left)"/>
                    <path d="M521 320Q521 304 536 302L962 249Q983 247 989 264L1080 622Q1083 641 1064 644L638 697Q618 698 612 680z" fill="#c3d0cf"/>
                    <path d="M641 697L632 748M1061 645L1054 698" fill="none"/>
                    <path d="M578 319L573 346L606 474L760 455L764 428L611 447z" fill="#5c6763"/>
                    <path d="M578 319L573 346L606 474L611 447z" fill="#687470"/>
                    <path d="M578 319L731 300L764 428L611 447z" fill="#c3d0cf"/>
                    <path d="M611 309L607 335L630 425L737 411L741 385L634 398z" fill="#5c6763"/>
                    <path d="M611 309L607 335L630 425L634 398z" fill="#687470"/>
                    <path d="M611 309L719 296L741 385L634 398z" fill="#c3d0cf"/>
                    <path d="M808.300 514.200L804.300 541.200A85 70 8 0 0 972.700 564.800L976.700 537.800z" fill="url(#cyl)"/>
                    <ellipse cx="892.500" cy="526" rx="85" ry="70" transform="rotate(8 892.500 526)" fill="#c3d0cf"/>
                    <path d="M837.100 490.500L833.100 517.500A61 50 8 0 0 953.900 534.500L957.900 507.500z" fill="url(#cyl)"/>
                    <ellipse cx="897.500" cy="499" rx="61" ry="50" transform="rotate(8 897.500 499)" fill="#c3d0cf"/>
                </g>
                <!-- view triad -->
                <g transform="translate(310.300 653.300) scale(.2722)">
                    <path d="M62 246L184 231L210 333L198 405L75 418L48 318zM62 246L88 350L210 335M88 350L75 418" fill="#fff" stroke="#999" stroke-width="3"/>
                    <path d="M104 238L94 185" stroke="#3c9c3c" stroke-width="13"/><path d="M85 147L81 190L107 184z" fill="#3ba33b"/>
                    <path d="M136 293L144 240" stroke="#0a2a80" stroke-width="13"/><path d="M151 204L130 240L159 245z" fill="#0a2a80"/>
                    <path d="M208 315L292 304" stroke="#c43c3c" stroke-width="13"/><path d="M341 299L290 291L292 319z" fill="#cc3f3f"/>
                    <g class="axis"><text x="66" y="134" fill="#555">Y</text><text x="144" y="200" fill="#3c4c9c">Z</text><text x="359" y="308" fill="#a33">X</text></g>
                    <path d="M1087 318L1095 365L1150 353Q1105 345 1087 318z" fill="#fff"/>
                    <path d="M1095 365L1040 150" stroke="#3fae4c" stroke-width="5"/><path d="M1033 120L1030 166L1050 160z" fill="#4db356"/>
                    <path d="M1095 365L1108 290L1120 220" stroke="#0b2c96" stroke-width="6" fill="none"/><path d="M1127 195L1110 230L1131 234zM1108 280L1098 305L1115 308z" fill="#0b2c96"/>
                    <path d="M1095 365L1200 354L1340 338" stroke="#c9403a" stroke-width="6" fill="none"/><path d="M1390 328L1338 325L1342 345zM1250 348L1196 343L1200 361z" fill="#c9403a"/>
                    <g class="axis"><text x="1044" y="102" fill="#47793f">YM</text><text x="1070" y="187" fill="#2f4fd0">ZM</text><text x="1058" y="267" fill="#2f66d0">ZC</text><text x="1215" y="332" fill="#aa4340">XC</text><text x="1355" y="312" fill="#aa4340">XM</text></g>
                </g>
                <path d="M603 400v14l4-3 2 5 2-1-2-5h4z" fill="#fff" stroke="#333" stroke-width=".8"/>
            </svg>
        </section>

        <form class="dialog">
            <div class="dialog-title"><svg><use href="#gear"/></svg><span>创建工序</span><button type="button" aria-label="帮助">?</button><button type="button" aria-label="关闭"><svg viewBox="0 0 16 16"><path d="M3 3l10 10M13 3L3 13" stroke="#fff" stroke-width="2"/></svg></button></div>
            <fieldset>
                <h3>类型</h3>
                <span class="combo"><select aria-label="类型"><option>mill_planar</option></select></span>
            </fieldset>
            <fieldset>
                <h3>工序子类型</h3>
                <div class="subtypes">
                    <button type="button"><svg><use href="#o1"/></svg></button>
                    <button type="button"><svg><use href="#o2"/></svg></button>
                    <button type="button"><svg><use href="#o3"/></svg></button>
                    <button type="button"><svg><use href="#o4"/></svg></button>
                    <button type="button"><svg><use href="#o5"/></svg></button>
                    <button type="button"><svg><use href="#o6"/></svg></button>
                    <button type="button"><svg><use href="#o7"/></svg></button>
                    <button type="button"><svg><use href="#o8"/></svg></button>
                    <button type="button"><svg><use href="#o9"/></svg></button>
                    <button type="button"><svg><use href="#o10"/></svg></button>
                    <button type="button"><svg><use href="#o11"/></svg></button>
                    <button type="button" class="on"><svg><use href="#o12"/></svg></button>
                    <button type="button"><svg><use href="#o13"/></svg></button>
                    <button type="button"><svg><use href="#o14"/></svg></button>
                    <button type="button"><svg><use href="#o15"/></svg></button>
                    <button type="button"><svg><use href="#o16"/></svg></button>
                    <button type="button"><svg><use href="#o17"/></svg></button>
                </div>
            </fieldset>
            <fieldset>
                <h3>位置</h3>
                <div class="rows">
                    <div class="row"><label for="prog">程序</label><span class="combo"><select id="prog"><option>PROGRAM</option></select></span></div>
                    <div class="row"><label for="tool">刀具</label><span class="combo"><select id="tool"><option>NONE</option></select></span></div>
                    <div class="row"><label for="geom">几何体</label><span class="combo"><select id="geom"><option>MCS_LOCAL</option></select></span></div>
                    <div class="row"><label for="method">方法</label><span class="combo"><select id="method"><option>METHOD</option></select></span></div>
                </div>
            </fieldset>
            <fieldset>
                <h3><label for="opname">名称</label></h3>
                <input type="text" id="opname" class="opname" value="PLANAR_MILL">
            </fieldset>
            <div class="actions">
                <button type="button" class="primary">确定</button>
                <button type="button">应用</button>
                <button type="button">取消</button>
            </div>
        </form>
    </main>

    <footer class="status">选择类型、子类型、位置，并指定工序名称</footer>

    <footer class="taskbar">
        <button class="start" aria-label="开始"><svg viewBox="0 0 16 16"><path d="M0 2l7-1v6.500H0zM8 1l8-1v7.500H8zM0 8.500h7V15l-7-1zM8 8.500h8V16l-8-1z" fill="#fff"/></svg></button>
        <label class="tsearch"><svg viewBox="0 0 16 16"><circle cx="10" cy="6" r="5" fill="none" stroke="#222" stroke-width="1.200"/><path d="M6 10l-5 5" stroke="#222" stroke-width="1.500"/></svg><input type="text" placeholder="在这里输入你要搜索的内容"></label>
        <div class="apps">
            <button><svg viewBox="0 0 24 24"><circle cx="12" cy="12" r="7" fill="none" stroke="#fff" stroke-width="2"/></svg></button>
            <button><svg viewBox="0 0 24 24"><path d="M5 4v3h9V4M5 20v-3h9v3M5 9h9v6H5zM18 4v3M18 11v9M17 9h2" fill="none" stroke="#fff" stroke-width="1.300"/></svg></button>
            <button class="open"><svg viewBox="0 0 24 24"><path d="M1 3h8l2 2h12v16H1z" fill="#f5c34a"/><path d="M1 8h22v13H1z" fill="#fbd872"/><path d="M6 22v-8h12v8h-4v-4h-4v4z" fill="#3d94c9"/></svg></button>
            <button><svg viewBox="0 0 24 24"><path d="M1 9l11-7 11 7v13H1z" fill="#1a78b8"/><path d="M3 8h18l-9 8z" fill="#fff"/><path d="M1 9l11 8 11-8v13H1z" fill="#2d9ddb"/></svg></button>
            <button><svg viewBox="0 0 24 24"><circle cx="12" cy="12" r="11" fill="#6cbd36"/><path d="M6 13h12q0-7-6-7t-6 6 6 6q3 0 5-2" fill="none" stroke="#fff" stroke-width="2.500"/></svg></button>
            <button><svg viewBox="0 0 24 24"><path d="M3 1h18v6H3z" fill="#5bb0dd"/><path d="M3 8h5v4H3zM9 8h5v4H9zM3 13h5v4H3zM9 13h5v4H9zM3 18h5v4H3zM9 18h5v4H9z" fill="#b6c6d0"/><path d="M15 8h6v4h-6zM15 13h6v9h-6z" fill="#3b6d92"/></svg></button>
            <button class="open here"><svg viewBox="0 0 24 24"><path d="M1 4h10v19H1z" fill="#1d7f7d"/><path d="M3 1h20v20H3z" fill="#8c1515"/><text x="6" y="15" class="nx-mark">NX</text></svg></button>
            <button class="open"><svg viewBox="0 0 24 24"><path d="M8 2l13 1-4 19L2 19z" fill="#a7cdd2"/><path d="M8 2l13 1-1 4L7 6z" fill="#dff1f2"/><path d="M2 19l15 3 4-19 1 3-4 18z" fill="#5a7b80"/></svg></button>
            <button class="open"><svg viewBox="0 0 24 24"><path d="M1 0h22v24H1z" fill="#e8d9b0"/><path d="M1 0h9l4 10L1 14z" fill="#e5aab0"/><path d="M14 0h9v12l-9-2z" fill="#bdd8a0"/><path d="M10 14l13 10V14z" fill="#88b3dd"/><path d="M7 2l6 11" stroke="#a33" stroke-width="1.500"/><circle cx="12" cy="12" r="3" fill="#c33"/><path d="M14 13v10l3-2 3 3 1-1-2-4h3z" fill="#fff" stroke="#222"/></svg></button>
            <button class="open"><svg viewBox="0 0 24 24"><rect width="24" height="24" rx="3" fill="#151d20"/><rect x="4" y="6" width="11" height="12" rx="3" fill="none" stroke="#fff" stroke-width="1.500"/><path d="M16 11l4-4v10l-4-4" fill="none" stroke="#fff" stroke-width="1.500"/></svg></button>
            <button class="open"><svg viewBox="0 0 24 24"><rect x="1" y="1" width="22" height="22" rx="3" fill="#1769dc"/><path d="M3 16q2-1 4-7 2-2 4 2 1-4 4-3 2 1 3 4 1 3 3 4-4 2-6-2-2 4-5 2-1-1-2-3-2 4-5 3z" fill="#fff"/></svg></button>
        </div>
        <div class="tray">
            <span class="weather"><svg viewBox="0 0 24 24"><path d="M8 2q5 3 3 9H3q6-2 5-9z" fill="#f6c545"/><path d="M5 20q-5-1-4-5 1-4 5-3 3-6 9-3 4 1 4 5 4 1 3 4-1 2-4 2z" fill="#dbe9f5"/></svg>28°C&ensp;空气优 29</span>
            <button><svg viewBox="0 0 16 16"><path d="M2 11l6-6 6 6" fill="none" stroke="#fff" stroke-width="1.200"/></svg></button>
            <button><svg><use href="#mic"/></svg></button>
            <button><svg viewBox="0 0 16 16"><path d="M3 4h8v8H3zM12 7l3-2v6l-3-2z" fill="none" stroke="#aaa"/></svg></button>
            <button><svg viewBox="0 0 16 16"><circle cx="8" cy="8" r="8" fill="#e9d722"/><path d="M8 4v8M4 8h8" stroke="#264" stroke-width="2"/></svg></button>
            <button><svg viewBox="0 0 16 16"><path d="M8 0l7 2v6q0 5-7 8-7-3-7-8V2z" fill="#7b9d52" stroke="#e6eedb"/><path d="M9 3L5 9h3l-1 4 4-6H8z" fill="#fff"/></svg></button>
            <button><svg viewBox="0 0 16 16"><path d="M4 4h11v8H4zM9 12v3M6 15h6M1 2h3v5H2v5" fill="none" stroke="#fff"/></svg></button>
            <button><svg viewBox="0 0 16 16"><path d="M1 6h2l4-4v12l-4-4H1zM9 5q2 3 0 6M11 3q4 5 0 10M13 1q6 7 0 14" fill="none" stroke="#fff"/></svg></button>
            <button class="ime">中</button>
            <button class="tray-sg"><svg><use href="#sg"/></svg></button>
            <time class="clock">19:32<br>2021/7/23</time>
            <button class="note"><svg viewBox="0 0 18 18"><path d="M1 1h16v12h-8l-3 4v-4H1z" fill="#fff"/><path d="M4 4h10M4 7h10M4 10h6" stroke="#1b2b3c"/><circle cx="14" cy="13" r="3" fill="#1b2b3c" stroke="#fff"/></svg></button>
        </div>
    </footer>

    <!-- floating windows -->
    <div class="meeting"><svg viewBox="0 0 12 10"><path d="M1 5h2v5H1zM5 3h2v7H5zM9 0h2v10H9z" fill="#2fae68"/></svg><i></i>腾讯会议</div>
    <div class="point"><header>Poi...<span></span></header><button>Start</button></div>
    <div class="sogou">
        <svg class="logo"><use href="#sg"/></svg>
        <svg viewBox="0 0 16 16"><path d="M1 4h14v7H1zM8 1v14" fill="none" stroke="#1766b5" stroke-width="2"/></svg>
        <svg viewBox="0 0 16 16"><circle cx="5" cy="5" r="2" fill="none" stroke="#1766b5" stroke-width="1.500"/><path d="M11 8h3q0 4-3 6" fill="#1766b5"/></svg>
        <svg viewBox="0 0 16 16"><circle cx="8" cy="8" r="8" fill="#1766b5"/><path d="M4 9h8q-1 4-4 4t-4-4z" fill="#fff"/><circle cx="5" cy="6" r="1" fill="#fff"/><circle cx="11" cy="6" r="1" fill="#fff"/></svg>
        <svg class="blue"><use href="#mic"/></svg>
        <svg viewBox="0 0 16 16"><rect y="2" width="16" height="12" rx="2" fill="#1766b5"/><path d="M2 5h12M2 8h12" stroke="#fff" stroke-width="1.500" stroke-dasharray="2 1"/><path d="M4 11h8" stroke="#fff" stroke-width="1.500"/></svg>
        <svg viewBox="0 0 16 16"><circle cx="8" cy="5" r="4" fill="#c3c5c6"/><path d="M1 15q0-6 7-6 6 0 7 6z" fill="#c3c5c6"/><path d="M11 9h4l-2 5" fill="none" stroke="#fff"/></svg>
        <svg viewBox="0 0 16 16"><path d="M1 2l4-2q3 3 6 0l4 2v5h-3v9H4V7H1z" fill="#1766b5"/></svg>
        <svg viewBox="0 0 16 16"><rect x="1" y="1" width="6" height="6" rx="1" fill="#1766b5"/><circle cx="12" cy="4" r="2.500" fill="none" stroke="#1766b5" stroke-width="1.500"/><rect x="1" y="9" width="6" height="6" rx="1" fill="#1766b5"/><rect x="9" y="9" width="6" height="6" rx="1" fill="#1766b5"/></svg>
    </div>
    <div class="speed-ball"><svg viewBox="0 0 70 70"><circle cx="35" cy="35" r="33" fill="#f5faf6" stroke="#e4ebe6"/><circle cx="35" cy="35" r="28.500" fill="#e6fbe9" stroke="#4d8d78"/><circle cx="35" cy="35" r="22" fill="#f5fef6"/><path d="M35 3a32 32 0 0 1 31 43" fill="none" stroke="#52cc78" stroke-width="4"/></svg><b>31<small>%</small></b><span>↓ 2.2K/s</span></div>
    <div class="speaking"><svg><use href="#mic"/></svg><span>正在讲话: CNC编程-杨工;</span></div>
    <div class="pill">
        <svg viewBox="0 0 18 18"><path d="M1 2h7v6H1zM1 10h7v7H1zM10 10h7v7h-7z" fill="#ddd"/><path d="M13 1l4 4-4 4-4-4z" fill="none" stroke="#ddd" stroke-width="1.500"/></svg>
        <i></i>
        <svg class="face" viewBox="0 0 18 18"><circle cx="9" cy="9" r="8" fill="#ddd"/><path d="M4 9h10q-1 5-5 5t-5-5z" fill="#777"/><circle cx="6" cy="6" r="1" fill="#777"/><circle cx="12" cy="6" r="1" fill="#777"/></svg>
        <svg viewBox="0 0 18 18"><path d="M2 2h14v11h-1v4l-4-4H2z" fill="#ddd"/><path d="M4 7h2M8 7h2M12 7h2" stroke="#777" stroke-width="2"/></svg>
        <i></i>
        <svg viewBox="0 0 18 18"><path d="M11 4L6 9l5 5" fill="none" stroke="#ccc" stroke-width="1.500"/></svg>
    </div>
    <div class="drawer"></div>
    <div class="corner tl"></div>
    <div class="corner tr"></div>
    <div class="corner bl"></div>
    <div class="corner br"></div>

    <script>
        // Keep the suggested operation name selected, ready to be overtyped
        const opName = document.getElementById('opname');
        opName.focus();
        opName.select();
    </script>
</body>
</html>
```
FILE: styles.css
```css
* {
    margin: 0;
    padding: 0;
    box-sizing: border-box;
}

html, body {
    height: 100%;
}

body {
    position: relative;
    display: flex;
    flex-direction: column;
    overflow: hidden;
    font-family: 'Noto Sans', 'Noto Sans CJK SC', sans-serif;
    font-size: 12px;
    color: #222;
    background: #fdfefd;
}

button, input, select {
    font: inherit;
    color: inherit;
}

button {
    border: none;
    background: none;
}

svg {
    display: block;
    flex: none;
}

.sprite {
    position: absolute;
    width: 0;
    height: 0;
}

.caret {
    flex: none;
    display: inline-block;
    border: 4px solid transparent;
    border-top-color: #111;
    border-bottom: none;
}

/* Title bar */
.titlebar {
    height: 28px;
    flex: none;
    display: grid;
    grid-template-columns: 1fr auto 1fr;
    align-items: center;
    padding: 0 6px 2px 5px;
    background: linear-gradient(90deg, #00688e, #00799f);
    color: #fff;
    font-size: 11px;
}

.title-left, .title-right {
    display: flex;
    align-items: center;
}

.title-left .caret {
    margin: 0 2px;
    border-top-color: #fff;
}

.title-right {
    justify-content: flex-end;
    gap: 8px;
}

.title-text {
    font-size: 13px;
    margin-left: 265px;
}

.nx {
    font-size: 20px;
    line-height: 26px;
    margin-right: 12px;
}

.tb {
    width: 24px;
    height: 24px;
    display: flex;
    align-items: center;
    justify-content: center;
}

.tb svg {
    width: 18px;
    height: 18px;
}

.tb.wide {
    width: auto;
    gap: 4px;
    margin: 0 4px 0 2px;
}

.dim {
    opacity: 0.25;
}

.tb-sep {
    width: 1px;
    height: 20px;
    margin: 0 3px;
    background: #005c80;
}

.title-left .lined {
    position: relative;
    margin-top: 4px;
}

.lined::before {
    content: '';
    position: absolute;
    left: -4px;
    top: -8px;
    width: 8px;
    height: 1px;
    background: #fff;
}

.siemens {
    font-size: 13px;
    margin-right: 14px;
    font-weight: 900;
}

.wc {
    width: 16px;
    height: 16px;
}

.wc svg {
    width: 16px;
    height: 16px;
}

/* Ribbon tabs */
.tabs {
    height: 28px;
    flex: none;
    display: flex;
    align-items: center;
    padding: 0 6px 0 4px;
    background: linear-gradient(90deg, #00688e, #00799f);
    font-size: 13px;
}

.tabs a {
    color: #fff;
    text-decoration: none;
    line-height: 22px;
    padding: 0 16px;
    border-bottom: 3px solid transparent;
}

.tabs a.active {
    color: #dfe3a3;
    border-color: #dfe3a3;
    margin-left: 9px;
}

.tab-tools {
    margin-left: auto;
    display: flex;
    align-items: center;
    gap: 10px;
}

.find {
    width: 128px;
    height: 22px;
    display: flex;
    align-items: center;
    background: #fff;
    padding-right: 1px;
}

.find input {
    width: 100px;
    flex: 1;
    border: none;
    outline: none;
    background: none;
    font-size: 11px;
}

.find input::placeholder {
    color: #8b9196;
}

.find svg {
    width: 18px;
    height: 18px;
}

/* Ribbon */
.ribbon {
    height: 94px;
    flex: none;
    display: flex;
    padding-top: 4px;
    border-bottom: 1px solid #d5d8d7;
    font-size: 11px;
}

.group {
    display: flex;
    flex-direction: column;
    margin-bottom: 4px;
    border-right: 1px solid #dcdfde;
}

.group-body {
    height: 71px;
    flex: none;
    display: flex;
    align-items: flex-start;
}

.group-label {
    position: relative;
    line-height: 18px;
    text-align: center;
    color: #2b6378;
}

.group-label .caret {
    position: absolute;
    right: 7px;
    top: 7px;
}

.big {
    display: flex;
    flex-direction: column;
    align-items: center;
    gap: 4px;
    padding: 1px 4px 0;
    line-height: 16px;
    white-space: nowrap;
}

.big svg {
    width: 32px;
    height: 32px;
}

.big:disabled {
    color: #aab0ae;
}

.mid .big {
    padding-top: 9px;
}

.insert {
    width: 133px;
}

.insert .group-body {
    display: grid;
    grid-template-columns: 60px 60px;
    grid-auto-rows: 35px;
    padding-left: 12px;
}

.small {
    display: flex;
    align-items: center;
    gap: 4px;
    height: 34px;
}

.small svg {
    width: 25px;
    height: 25px;
}

.insert .group-label {
    padding-right: 16px;
}

.anim {
    width: 256px;
}

.anim .group-body {
    padding-left: 12px;
}

.transport {
    display: grid;
    grid-template-columns: 24px 24px 24px 24px;
    grid-auto-rows: 35px;
    align-items: center;
    justify-items: center;
}

.round, .round svg {
    width: 24px;
    height: 24px;
}

.round svg, .play svg {
    fill: none;
    stroke: #333;
}

.play {
    padding: 1px 0 0;
}

.speed {
    display: flex;
    flex-direction: column;
    align-items: center;
    gap: 3px;
    padding: 9px 0 0 9px;
    line-height: 16px;
}

.speed input {
    appearance: none;
    width: 96px;
    height: 17px;
    background: linear-gradient(#a9adac, #a9adac) center / 100% 4px no-repeat;
}

.speed input::-webkit-slider-thumb {
    appearance: none;
    width: 8px;
    height: 17px;
    background: #005f83;
}

.tools .group-body {
    padding-left: 5px;
}

.tools {
    width: 136px;
}

.path {
    width: 173px;
}

.path .group-body {
    padding-left: 7px;
}

.post {
    width: 378px;
}

.post .group-body {
    justify-content: space-between;
    padding: 0 8px;
}

.show {
    width: 236px;
}

.show .group-body {
    padding-left: 9px;
}

.toggles {
    display: flex;
    flex-direction: column;
    align-items: flex-start;
    gap: 3px;
    padding-top: 1px;
    margin-right: 2px;
}

.toggle {
    height: 32px;
    display: flex;
    align-items: center;
    gap: 2px;
    padding: 0 3px 0 2px;
    background: #d0e6e4;
    border: 1px solid #b5d3d1;
}

.toggle svg {
    width: 25px;
    height: 25px;
}

.big.on {
    height: 74px;
    margin-top: -2px;
    padding: 3px 2px 0;
    background: #d0e6e4;
    border: 1px solid #b5d3d1;
    border-top: none;
}

.measure {
    width: 50px;
}

.measure .group-body {
    justify-content: center;
}

.group-end {
    flex: 1;
    display: flex;
    justify-content: flex-end;
    align-items: flex-end;
    padding: 0 5px 7px;
}

/* Selection bar */
.selbar {
    height: 28px;
    flex: none;
    display: flex;
    align-items: center;
    gap: 1px;
    padding-left: 12px;
    border-bottom: 1px solid #a9adac;
}

.menu {
    display: flex;
    align-items: center;
    font-size: 11px;
}

.menu svg {
    width: 12px;
    height: 12px;
    margin-right: 6px;
}

.menu .caret {
    margin-left: 5px;
}

.sep {
    width: 1px;
    height: 22px;
    margin: 0 6px;
    background: #d5d8d7;
}

.sep.far {
    margin: 0 12px 0 25px;
}

.combo {
    position: relative;
    display: block;
    height: 24px;
}

.combo select {
    appearance: none;
    width: 100%;
    height: 100%;
    padding: 0 16px 0 4px;
    border: 1px solid #777;
    border-radius: 0;
    background: #fff;
    opacity: 1;
}

.combo::after {
    content: '';
    position: absolute;
    right: 5px;
    top: 10px;
    border: 4px solid transparent;
    border-top-color: #111;
    border-bottom: none;
}

.combo.off {
    width: 149px;
    height: 22px;
    font-size: 11px;
}

.combo.off select {
    color: #a2a7a5;
    background: #f8faf9;
    border-color: #b5b9b8;
    padding-left: 2px;
}

.combo.off::after {
    border-top-color: #8d9290;
}

.combo.scope {
    width: 156px;
}

.combo.off + .ic {
    margin: 0 4px;
}

.combo.off + .ic.dark {
    margin: 0 0 0 4px;
}

.ic {
    width: 24px;
    height: 22px;
    display: flex;
    align-items: center;
    justify-content: center;
    border: 1px solid transparent;
    color: #a9aeac;
}

.ic svg {
    width: 17px;
    height: 17px;
}

.ic.dark {
    color: #222;
}

.ic.on {
    background: #d0e6e4;
    border-color: #b5d3d1;
}

.ic.framed {
    border-color: #cbd6dc;
    background: #f7fafc;
}

.selbar .spaced {
    margin: 0 3px;
}

.selbar .end {
    margin-left: auto;
    margin-right: 5px;
}

/* Work area */
.work {
    position: relative;
    flex: 1;
    min-height: 0;
    display: flex;
}

.rail {
    width: 32px;
    display: flex;
    flex-direction: column;
    background: #d9dbda;
    border-right: 1px solid #a9adac;
}

.rail button {
    height: 42px;
    flex: none;
    display: flex;
    align-items: center;
    justify-content: center;
    padding-left: 4px;
}

.rail svg {
    width: 24px;
    height: 24px;
}

.rail .rail-gear {
    height: 26px;
    padding: 0 2px 0 0;
    margin-bottom: 16px;
}

.rail .rail-gear svg {
    width: 16px;
    height: 16px;
}

.rail .current {
    margin: 0 -1px 0 2px;
    padding: 0 0 0 1px;
    background: #fff;
    border: 1px solid #a9adac;
    border-right: none;
}

.rail-web {
    margin-top: 9px;
}

.rail-web button {
    width: 100%;
    height: 52px;
}

.navigator {
    width: 284px;
    display: flex;
    flex-direction: column;
    padding: 5px 15px 7px 10px;
    border-right: 2px solid #b3b7b5;
}

.navigator::after {
    content: '';
    height: 1px;
    margin: 5px -5px 0 -4px;
    background: #c9cdcb;
}

.navigator h2 {
    font-size: 12px;
    font-weight: normal;
    line-height: 20px;
}

.nav-tools {
    display: flex;
    gap: 2px;
    margin: 7px 0 4px;
}

.nav-tools button {
    width: 32px;
    height: 32px;
    display: flex;
    align-items: center;
    justify-content: center;
}

.nav-tools svg {
    width: 26px;
    height: 26px;
}

.nav-tools .on {
    background: #8fc2ca;
}

.nav-tools .box {
    border: 1px solid #777;
}

.tree {
    position: relative;
    flex: 1;
    display: flex;
    flex-direction: column;
    margin-left: 2px;
    border: 1px solid #d0d4d2;
}

.tree-head {
    height: 21px;
    line-height: 21px;
    padding-left: 7px;
    background: #f0f2f0;
    border-bottom: 1px solid #d5d8d6;
}

.tree ul {
    flex: 1;
    list-style: none;
    margin: 0 2px;
    background: repeating-linear-gradient(#fdfffd 0 19px, #eaeeeb 19px 20px, #f7faf8 20px 39px, #eaeeeb 39px 40px);
}

.tree ul::after {
    content: '';
    position: absolute;
    top: 21px;
    bottom: 17px;
    right: 13px;
    width: 1px;
    background: #000;
}

.tree li {
    height: 20px;
    display: flex;
    align-items: center;
    padding-left: 3px;
}

.tree li svg {
    width: 16px;
    height: 16px;
    margin-right: 4px;
}

.expander {
    width: 9px;
    height: 9px;
    line-height: 7px;
    text-align: center;
    border: 1px solid #b5b9b8;
}

.bang {
    width: 2px;
    height: 15px;
    margin: 0 7px 0 12px;
    background: #ecc66a;
}

.tree li.sub {
    position: relative;
    padding-left: 36px;
}

.tree li.sub::before {
    content: '';
    position: absolute;
    left: 26px;
    top: -10px;
    width: 9px;
    height: 20px;
    border-left: 1px dotted #888;
    border-bottom: 1px dotted #888;
}

.tree li .tick {
    width: 15px;
    margin-right: 0;
}

.picked {
    flex: 1;
    line-height: 19px;
    padding-left: 3px;
    margin-left: -3px;
    background: #8fc2ca;
}

.hscroll {
    height: 16px;
    display: flex;
    align-items: center;
    padding: 0 5px;
    margin: 0 2px;
    background: #eff1ef;
    font-size: 18px;
    font-weight: bold;
    line-height: 12px;
    color: #444;
}

.hscroll .thumb {
    width: 17px;
    height: 15px;
    margin-left: 4px;
    background: #cdcfce;
}

.hscroll .right {
    margin-left: auto;
}

.viewport {
    flex: 1;
    min-width: 0;
    background: linear-gradient(#fdfffe, #fff);
}

.tabline {
    height: 26px;
    border-bottom: 2px solid #1c6f88;
}

.scene {
    width: 100%;
}

.axis {
    font-family: 'Noto Sans', sans-serif;
    font-size: 36px;
}

/* Create operation dialog */
.dialog {
    position: absolute;
    left: 197px;
    top: 0;
    width: 328px;
    padding: 0 5px 10px;
    background: #eff1f0;
    border: 1px solid #d0d4d2;
    border-top: none;
}

.dialog-title {
    height: 24px;
    display: flex;
    align-items: center;
    gap: 8px;
    margin: 0 -6px 3px;
    padding: 0 9px 0 7px;
    background: #005f83;
    color: #fff;
    font-size: 14px;
}

.dialog-title svg {
    width: 14px;
    height: 14px;
}

.dialog-title span {
    flex: 1;
}

.dialog-title button {
    width: 14px;
    font-weight: bold;
}

.dialog fieldset {
    border: none;
    border-bottom: 1px solid #c3c7c5;
    background: #fdfffe;
    padding: 2px 9px 9px;
    margin-bottom: 2px;
}

.dialog h3 {
    display: flex;
    align-items: center;
    gap: 7px;
    margin-left: -2px;
    height: 22px;
    margin-bottom: 7px;
    font-size: 14px;
    font-weight: normal;
    color: #2b6378;
}

.dialog h3::before {
    content: '';
    border: 5px solid transparent;
    border-top-color: #1f5e70;
    border-bottom: none;
}

.subtypes {
    display: grid;
    grid-template-columns: repeat(6, 32px);
    gap: 2px;
    justify-content: center;
    padding-top: 3px;
}

.subtypes button {
    height: 32px;
    display: flex;
    align-items: center;
    justify-content: center;
}

.subtypes svg {
    width: 24px;
    height: 24px;
}

.subtypes .on {
    background: #8fc2ca;
}

.rows {
    display: flex;
    flex-direction: column;
    gap: 3px;
}

.row {
    display: flex;
    justify-content: space-between;
    align-items: center;
}

.row .combo {
    width: 141px;
}

.opname {
    display: block;
    width: 100%;
    height: 23px;
    padding: 0 4px;
    border: 1px solid #777;
    outline: none;
}

.opname::selection {
    color: #fff;
    background: #1a70b8;
}

.actions {
    display: flex;
    justify-content: flex-end;
    gap: 5px;
    padding: 8px 10px 0;
}

.actions button {
    width: 54px;
    height: 25px;
    border: 1px solid #1f5e70;
    background: #eef4fa;
    color: #2b6378;
}

.actions .primary {
    background: #005f83;
    color: #fff;
}

.status {
    height: 22px;
    flex: none;
    line-height: 20px;
    padding-left: 4px;
    border-top: 1px solid #a9adac;
    border-bottom: 1px solid #a9adac;
    font-size: 11px;
    font-weight: 500;
    color: #000;
}

/* Taskbar */
.taskbar {
    height: 40px;
    flex: none;
    display: flex;
    background: linear-gradient(90deg, #1f3839, #1f3839 50%, #192846 85%);
    color: #fff;
}

.start {
    width: 48px;
}

.start svg {
    width: 16px;
    height: 16px;
    margin: 0 auto;
}

.tsearch {
    width: 344px;
    display: flex;
    align-items: center;
    gap: 12px;
    padding-left: 12px;
    background: #f0f3f1;
    border-bottom: 1px solid #c3c7c5;
}

.tsearch svg {
    width: 16px;
    height: 16px;
}

.tsearch input {
    flex: 1;
    border: none;
    outline: none;
    background: none;
    font-size: 14px;
}

.tsearch input::placeholder {
    color: #333;
}

.apps {
    display: flex;
    gap: 1px;
}

.apps button {
    width: 48px;
    display: flex;
    align-items: center;
    justify-content: center;
}

.apps svg {
    width: 24px;
    height: 24px;
}

.apps .open {
    background: linear-gradient(#76b9ed, #76b9ed) bottom / 40px 2px no-repeat;
}

.apps .here {
    background-color: #4b6263;
    background-size: 48px 2px;
}

.nx-mark {
    font-family: Roboto, sans-serif;
    font-size: 10px;
    font-weight: bold;
    fill: #fff;
}

.tray {
    margin-left: auto;
    display: flex;
    align-items: center;
    padding-right: 22px;
}

.weather {
    display: flex;
    align-items: center;
    gap: 8px;
    font-size: 14px;
    margin-right: 11px;
    white-space: nowrap;
}

.weather svg {
    width: 24px;
    height: 24px;
}

.tray button {
    width: 24px;
    height: 24px;
    display: flex;
    align-items: center;
    justify-content: center;
}

.tray button svg {
    width: 17px;
    height: 17px;
}

.tray .tray-sg {
    margin-left: 4px;
}

.clock {
    width: 84px;
    text-align: center;
    line-height: 19px;
}

.tray .note {
    margin-left: 3px;
}

/* Things floating over the desktop */
.meeting {
    position: absolute;
    left: 914px;
    top: 0;
    height: 20px;
    display: flex;
    align-items: center;
    gap: 6px;
    padding: 0 6px;
    background: #12455a;
    border-radius: 0 0 4px 4px;
    color: #cfe0e4;
}

.meeting svg {
    width: 12px;
    height: 10px;
}

.meeting i {
    width: 8px;
    height: 8px;
    border-radius: 50%;
    background: #3cbf76;
}

.point {
    position: absolute;
    right: 60px;
    top: 240px;
    width: 52px;
    background: #fff;
    box-shadow: 0 1px 8px rgba(0, 0, 0, 0.35);
}

.point header {
    height: 26px;
    display: flex;
    align-items: center;
    justify-content: space-between;
    padding: 0 1px 0 3px;
    color: #999;
}

.point header span {
    width: 19px;
    height: 19px;
    background: #e3e5e4;
}

.point button {
    display: block;
    width: 50px;
    height: 26px;
    margin: 0 auto 1px;
    border: 2px solid #1b6595;
    background: #e2e5e4;
    color: #111;
}

.sogou {
    position: absolute;
    right: 16px;
    bottom: 126px;
    height: 26px;
    display: flex;
    align-items: center;
    gap: 8px;
    padding-right: 4px;
    background: #fff;
    border: 1px solid #bfd0dc;
    border-radius: 2px;
}

.sogou svg {
    width: 16px;
    height: 16px;
}

.sogou .logo {
    width: 30px;
    height: 30px;
    margin-left: -16px;
}

.sogou .blue {
    color: #1766b5;
}

.speed-ball {
    position: absolute;
    right: 254px;
    bottom: 43px;
    width: 70px;
    height: 70px;
    z-index: 2;
    display: flex;
    flex-direction: column;
    align-items: center;
    padding-top: 13px;
    color: #333;
}

.speed-ball svg {
    position: absolute;
    inset: 0;
    z-index: -1;
}

.speed-ball b {
    font-family: 'Open Sans', sans-serif;
    font-size: 22px;
    line-height: 28px;
    font-weight: 300;
}

.speed-ball small {
    font-size: 12px;
    font-weight: 400;
}

.speed-ball span {
    font-size: 10px;
    line-height: 12px;
}

.speaking {
    position: absolute;
    right: 11px;
    bottom: 45px;
    width: 244px;
    height: 36px;
    display: flex;
    align-items: center;
    background: #353d3d;
    border-radius: 4px;
    color: #fff;
}

.speaking svg {
    width: 16px;
    height: 16px;
    margin: 0 9px;
    color: #7c8d8b;
}

.speaking span {
    padding-left: 7px;
    border-left: 1px solid #252b2b;
    line-height: 28px;
}

.pill {
    position: absolute;
    left: 12px;
    bottom: 88px;
    width: 116px;
    height: 30px;
    display: flex;
    align-items: center;
    justify-content: space-between;
    padding: 0 7px 0 8px;
    border-radius: 15px;
    background: rgba(112, 114, 113, 0.9);
}

.pill svg {
    width: 18px;
    height: 18px;
}

.pill .face {
    margin-left: 5px;
}

.pill i {
    width: 1px;
    height: 20px;
    background: #8f9190;
}

.drawer {
    position: absolute;
    right: 0;
    top: 35px;
    width: 6px;
    height: 88px;
    background: #1d2b47;
}

.corner {
    position: absolute;
    width: 120px;
    height: 120px;
    border: 0 solid #00d77c;
    pointer-events: none;
}

.tl {
    left: 0;
    top: 0;
    border-width: 6px 0 0 6px;
}

.tr {
    right: 0;
    top: 0;
    height: 35px;
    border-width: 6px 6px 0 0;
}

.bl {
    left: 0;
    bottom: 0;
    border-width: 0 0 6px 6px;
}

.br {
    right: 0;
    bottom: 0;
    border-width: 0 6px 6px 0;
}
```
